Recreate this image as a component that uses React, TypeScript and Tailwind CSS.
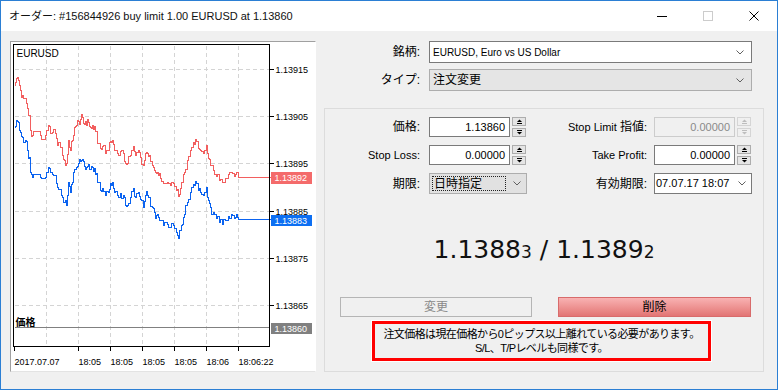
import React from "react";

// key points of the ask line, page coordinates; bid is drawn as ask + 42
const ASK: [number, number][] = [
  [14, 85], [16, 78], [18, 80], [20, 90], [22, 95], [25, 98], [27, 108], [29, 115], [30, 130],
  [32, 135], [40, 135], [45, 135], [47, 130], [49, 126], [52, 132], [55, 133], [57, 145],
  [60, 147], [62, 155], [64, 160], [66, 163], [68, 140], [70, 150], [72, 140], [74, 127],
  [76, 125], [78, 121], [80, 119], [82, 117], [84, 124], [86, 125], [88, 122], [90, 127],
  [92, 125], [94, 126], [96, 131], [100, 148], [102, 146], [105, 153], [108, 150], [110, 141],
  [112, 140], [114, 150], [117, 153], [120, 151], [123, 153], [125, 163], [127, 163],
  [130, 155], [133, 146], [135, 155], [138, 150], [140, 157], [143, 165], [145, 153],
  [147, 153], [149, 155], [152, 165], [154, 170], [156, 173], [158, 175], [160, 178],
  [163, 183], [167, 182], [170, 185], [173, 183], [176, 190], [178, 196], [180, 188],
  [182, 182], [184, 172], [187, 160], [190, 150], [193, 142], [195, 139], [198, 148],
  [200, 150], [203, 153], [206, 145], [208, 158], [210, 165], [213, 170], [216, 176],
  [219, 180], [222, 182], [225, 178], [228, 174], [231, 172], [234, 176], [236, 172],
  [238, 177], [270, 177],
];

function rng(seed: number) {
  let s = seed;
  return () => {
    s = (s * 1103515245 + 12345) & 0x7fffffff;
    return s / 0x7fffffff;
  };
}

function stepPath(keys: [number, number][], dy: number, seed: number, last: number) {
  const r = rng(seed);
  let cy = keys[0][1] + dy;
  let d = `M${keys[0][0]} ${cy}`;
  for (let i = 1; i < keys.length; i++) {
    const x0 = keys[i - 1][0];
    const [x1, y1] = keys[i];
    const ty = i === keys.length - 1 ? last : y1 + dy;
    if (x1 - x0 >= 2 && x1 < 240) {
      const jy = Math.round((cy + ty) / 2 + (r() - 0.5) * 9);
      d += ` H${x0 + 1} V${jy}`;
      cy = jy;
    }
    d += ` H${x1} V${ty}`;
    cy = ty;
  }
  return d;
}

const GRID_X = [46, 78, 110, 142, 174, 206, 238];
const LEVELS: [number, string][] = [
  [69, "1.13915"],
  [116, "1.13905"],
  [163, "1.13895"],
  [211, "1.13885"],
  [258, "1.13875"],
  [305, "1.13865"],
];
const TIMES: [number, string][] = [
  [14, "2017.07.07"],
  [78, "18:05"],
  [110, "18:05"],
  [142, "18:05"],
  [174, "18:05"],
  [206, "18:06"],
  [238, "18:06:22"],
];

function Chart() {
  const axis = "font-['Liberation_Sans',sans-serif] text-[9px]";
  return (
    <div className="ml-[9px] mt-[10px] h-[331px] w-[306px] border border-t-[#a0a0a0] border-l-[#a0a0a0] border-r-white border-b-[#e3e3e3] bg-white">
      <svg width="304" height="329" shapeRendering="crispEdges">
        <g transform="translate(-10.5 -41.5)">
          {GRID_X.map((x) => (
            <line key={x} x1={x} y1={45} x2={x} y2={346} stroke="#d4d4d4" strokeDasharray="4 3" />
          ))}
          {LEVELS.map(([y]) => (
            <line key={y} x1={14} y1={y} x2={269} y2={y} stroke="#d4d4d4" strokeDasharray="4 3" />
          ))}
          <line x1={14} y1={327} x2={269} y2={327} stroke="#808080" />
          <path d={stepPath(ASK, 0, 7, 177)} fill="none" stroke="#f25f5f" />
          <path d={stepPath(ASK, 42, 19, 219)} fill="none" stroke="#0b63f0" />
          <rect x={13} y={44} width={256} height={302} fill="none" stroke="#000" />
          {LEVELS.map(([y, t]) => (
            <g key={t}>
              <line x1={269} y1={y} x2={273} y2={y} stroke="#000" />
              <text x={275} y={y + 3.5} className={axis} fill="#000">
                {t}
              </text>
            </g>
          ))}
          {TIMES.map(([x, t], i) => (
            <g key={i}>
              <line x1={x} y1={346} x2={x} y2={350} stroke="#000" />
              <text x={x} y={364.5} className={axis} fill="#000">
                {t}
              </text>
            </g>
          ))}
          <rect x={270} y={171} width={41} height={12} fill="#f46b6b" />
          <text x={274} y={180.5} className={axis} fill="#fff">1.13892</text>
          <rect x={270} y={214} width={41} height={11} fill="#0d6ff2" />
          <text x={274} y={223} className={axis} fill="#fff">1.13883</text>
          <rect x={270} y={322} width={41} height={11} fill="#808080" />
          <text x={274} y={331} className={axis} fill="#fff">1.13860</text>
          <text x={16} y={56} className="font-['Liberation_Sans',sans-serif] text-[10px]" fill="#000">
            EURUSD
          </text>
          <text x={15} y={325.5} className="font-['Noto_Sans_CJK_JP',sans-serif] text-[10px] font-bold" fill="#000">
            価格
          </text>
        </g>
      </svg>
    </div>
  );
}

function Chevron({ color = "#606060" }: { color?: string }) {
  return (
    <svg width="8" height="5" className="shrink-0">
      <polyline points="0.5,0.5 4,4 7.5,0.5" fill="none" stroke={color} />
    </svg>
  );
}

function Spin({ disabled }: { disabled?: boolean }) {
  const box = disabled ? "border-[#d5d5d5] bg-[#f0f0f0]" : "border-[#adadad] bg-[#e5e5e5]";
  const c = disabled ? "#bdbdbd" : "#000";
  return (
    <div className="ml-[2px] flex h-[20px] w-[14px] flex-col justify-between">
      <div className={`flex h-[9px] items-center justify-center border ${box}`}>
        <svg width="7" height="5">
          <polygon points="1,3 3.5,0.5 6,3" fill={c} />
          <rect x="1" y="4" width="5" height="1" fill={c} />
        </svg>
      </div>
      <div className={`flex h-[9px] items-center justify-center border ${box}`}>
        <svg width="7" height="5">
          <rect x="1" y="0" width="5" height="1" fill={c} />
          <polygon points="1,2 3.5,4.5 6,2" fill={c} />
        </svg>
      </div>
    </div>
  );
}

function NumField({ value, disabled }: { value: string; disabled?: boolean }) {
  return (
    <div className="flex items-center">
      <div
        className={`flex h-[20px] w-[81px] items-center justify-end pr-[4px] text-[11px] ${
          disabled ? "border border-[#cccccc] bg-[#f0f0f0] text-[#8a8a8a]" : "border border-[#7a7a7a] bg-white"
        }`}
      >
        {value}
      </div>
      <Spin disabled={disabled} />
    </div>
  );
}

function OrderForm() {
  return (
    <div className="flex flex-col pt-[10px]">
      <div className="flex h-[22px] items-center">
        <div className="w-[104px] text-right text-[12px]">銘柄:</div>
        <div className="ml-[9px] flex h-[22px] w-[323px] items-center justify-between border border-[#7a7a7a] bg-white pl-[3px] pr-[7px] text-[10px]">
          <span>EURUSD, Euro vs US Dollar</span>
          <Chevron />
        </div>
      </div>
      <div className="mt-[6px] flex h-[22px] items-center">
        <div className="w-[104px] text-right text-[12px]">タイプ:</div>
        <div className="ml-[9px] flex h-[22px] w-[323px] items-center justify-between border border-[#adadad] bg-[#e5e5e5] pl-[3px] pr-[7px] text-[12px]">
          <span>注文変更</span>
          <Chevron />
        </div>
      </div>

      <div className="ml-[8px] mt-[17px] flex h-[264px] w-[440px] flex-col border border-[#dcdcdc] pt-[8px]">
        <div className="flex h-[20px] items-center">
          <div className="w-[95px] text-right text-[12px]">価格:</div>
          <div className="ml-[9px]">
            <NumField value="1.13860" />
          </div>
          <div className="w-[121px] text-right text-[11px]">
            Stop Limit <span className="text-[12px]">指値</span>:
          </div>
          <div className="ml-[7px]">
            <NumField value="0.00000" disabled />
          </div>
        </div>
        <div className="mt-[8px] flex h-[20px] items-center">
          <div className="w-[95px] text-right text-[11px]">Stop Loss:</div>
          <div className="ml-[9px]">
            <NumField value="0.00000" />
          </div>
          <div className="w-[121px] text-right text-[11px]">Take Profit:</div>
          <div className="ml-[7px]">
            <NumField value="0.00000" />
          </div>
        </div>
        <div className="mt-[8px] flex h-[21px] items-center">
          <div className="w-[95px] text-right text-[12px]">期限:</div>
          <div className="ml-[9px] flex h-[21px] w-[98px] items-center border border-[#adadad] bg-[#e1e1e1] pl-[2px] pr-[5px]">
            <div className="flex h-[15px] w-[74px] items-center border border-dotted border-[#222] pl-[1px] text-[12px]">
              日時指定
            </div>
            <div className="ml-auto">
              <Chevron />
            </div>
          </div>
          <div className="w-[120px] text-right text-[12px]">有効期限:</div>
          <div className="ml-[7px] flex h-[21px] w-[98px] items-center justify-between border border-[#7a7a7a] bg-white pl-[1px] pr-[5px] text-[11px]">
            <span>07.07.17 18:07</span>
            <Chevron />
          </div>
        </div>

        <div className="mt-[41px] h-[30px] text-center font-['DejaVu_Sans',sans-serif] text-[25px] leading-[30px] text-[#111]">
          1.1388<span className="text-[17px]">3</span> / 1.1389<span className="text-[17px]">2</span>
        </div>

        <div className="ml-[15px] mt-[32px] flex">
          <div className="flex h-[20px] w-[192px] items-center justify-center border border-[#b5b5b5] bg-[#f0f0f0] text-[12px] text-[#8a8a8a]">
            変更
          </div>
          <div className="ml-[26px] flex h-[20px] w-[193px] items-center justify-center border border-[#d86b6b] bg-gradient-to-b from-[#f8b2b2] to-[#e27474] text-[12px]">
            削除
          </div>
        </div>

        <div className="ml-[47px] mt-[4px] flex h-[40px] w-[339px] flex-col items-center justify-center border-[3px] border-[#ff0000] text-[11px] leading-[14px] tracking-[-0.6px] ring-1 ring-white">
          <div>注文価格は現在価格から0ピップス以上離れている必要があります。</div>
          <div>S/L、T/Pレベルも同様です。</div>
        </div>
      </div>
    </div>
  );
}

function TitleBar() {
  return (
    <div className="flex h-[30px] shrink-0 items-center bg-white">
      <div className="ml-[8px] text-[11px] text-[#111]">オーダー: #156844926 buy limit 1.00 EURUSD at 1.13860</div>
      <div className="ml-auto flex h-full">
        <div className="flex w-[46px] items-center justify-center">
          <div className="h-px w-[10px] bg-black" />
        </div>
        <div className="flex w-[46px] items-center justify-center">
          <div className="h-[10px] w-[10px] border border-[#cccccc]" />
        </div>
        <div className="flex w-[46px] items-center justify-center">
          <svg width="10" height="10">
            <path d="M0.5 0.5 L9.5 9.5 M9.5 0.5 L0.5 9.5" stroke="#000" strokeWidth="1" />
          </svg>
        </div>
      </div>
    </div>
  );
}

export default function App() {
  return (
    <div className="flex h-[390px] w-[778px] flex-col overflow-hidden border border-[#2b7fd4] bg-[#f0f0f0] font-['Liberation_Sans','Noto_Sans_CJK_JP',sans-serif] text-black">
      <TitleBar />
      <div className="flex min-h-0 flex-1">
        <Chart />
        <OrderForm />
      </div>
    </div>
  );
}
